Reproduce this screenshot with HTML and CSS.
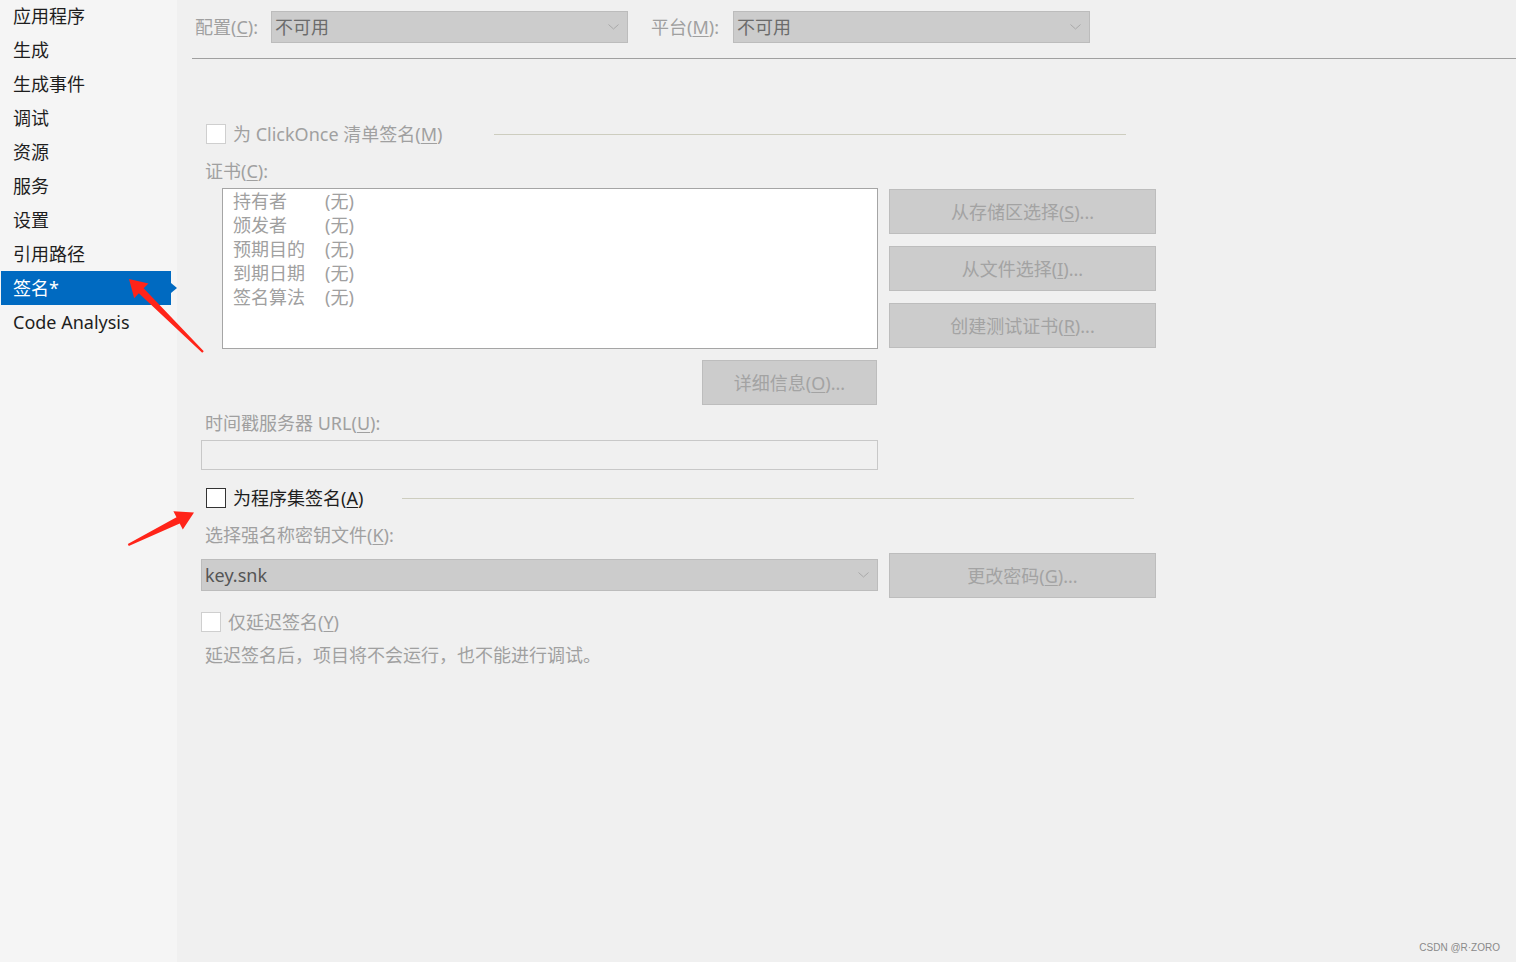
FILE: index.html
```html
<!DOCTYPE html>
<html lang="zh-CN">
<head>
<meta charset="utf-8">
<title>签名</title>
<link rel="stylesheet" href="styles.css">
</head>
<body>
<div class="app">
  <nav class="sidebar">
    <div class="nav-item">应用程序</div>
    <div class="nav-item">生成</div>
    <div class="nav-item">生成事件</div>
    <div class="nav-item">调试</div>
    <div class="nav-item">资源</div>
    <div class="nav-item">服务</div>
    <div class="nav-item">设置</div>
    <div class="nav-item">引用路径</div>
    <div class="nav-item active">签名*</div>
    <div class="nav-item">Code Analysis</div>
  </nav>
  <main class="main">
    <div class="topbar">
      <span class="lbl dis lbl-config">配置(<u>C</u>):</span>
      <div class="combo combo-top">
        <span class="combo-text">不可用</span>
        <svg class="chev" width="11" height="6" viewBox="0 0 11 6"><polyline points="0.5,0.5 5.5,5 10.5,0.5" fill="none" stroke="#a8a8a8" stroke-width="1"/></svg>
      </div>
      <span class="lbl dis lbl-platform">平台(<u>M</u>):</span>
      <div class="combo combo-top">
        <span class="combo-text">不可用</span>
        <svg class="chev" width="11" height="6" viewBox="0 0 11 6"><polyline points="0.5,0.5 5.5,5 10.5,0.5" fill="none" stroke="#a8a8a8" stroke-width="1"/></svg>
      </div>
    </div>

    <div class="content">
      <div class="check-row row-clickonce">
        <span class="cb cb-dis"></span>
        <span class="dis">为 ClickOnce 清单签名(<u>M</u>)</span>
        <span class="rule rule-clickonce"></span>
      </div>

      <div class="field-label dis lbl-cert">证书(<u>C</u>):</div>

      <div class="pair-grid cert-grid">
        <div class="cert-box">
          <div class="cert-row"><span class="cert-key">持有者</span><span>(无)</span></div>
          <div class="cert-row"><span class="cert-key">颁发者</span><span>(无)</span></div>
          <div class="cert-row"><span class="cert-key">预期目的</span><span>(无)</span></div>
          <div class="cert-row"><span class="cert-key">到期日期</span><span>(无)</span></div>
          <div class="cert-row"><span class="cert-key">签名算法</span><span>(无)</span></div>
        </div>
        <div class="btn-stack">
          <div class="btn">从存储区选择(<u>S</u>)...</div>
          <div class="btn">从文件选择(<u>I</u>)...</div>
          <div class="btn">创建测试证书(<u>R</u>)...</div>
        </div>
        <div class="btn btn-details">详细信息(<u>O</u>)...</div>
      </div>

      <div class="field-label dis lbl-url">时间戳服务器 URL(<u>U</u>):</div>
      <div class="textbox"></div>

      <div class="check-row row-assembly">
        <span class="cb cb-on"></span>
        <span class="strong">为程序集签名(<u>A</u>)</span>
        <span class="rule rule-assembly"></span>
      </div>

      <div class="field-label dis lbl-key">选择强名称密钥文件(<u>K</u>):</div>

      <div class="pair-grid key-grid">
        <div class="combo combo-key">
          <span class="combo-text key-text">key.snk</span>
          <svg class="chev" width="11" height="6" viewBox="0 0 11 6"><polyline points="0.5,0.5 5.5,5 10.5,0.5" fill="none" stroke="#a8a8a8" stroke-width="1"/></svg>
        </div>
        <div class="btn">更改密码(<u>G</u>)...</div>
      </div>

      <div class="check-row row-delay">
        <span class="cb cb-dis"></span>
        <span class="dis">仅延迟签名(<u>Y</u>)</span>
      </div>

      <div class="field-label dis lbl-note">延迟签名后，项目将不会运行，也不能进行调试。</div>
    </div>
  </main>
</div>

<svg class="arrows" width="1516" height="962" viewBox="0 0 1516 962">
  <polygon fill="#ff2419" points="129,279 148.5,283.5 143.6,288.3 203.8,351.2 202.2,352.8 138.8,293.3 134.2,298.2"/>
  <polygon fill="#ff2419" points="194,512.5 182.8,529.4 179.7,523.4 128.8,545.9 127.8,544.1 176.5,517.2 173.4,511.2"/>
</svg>

<div class="watermark">CSDN @R·ZORO</div>
</body>
</html>
```

FILE: styles.css
```css
* {
  box-sizing: border-box;
}

html, body {
  margin: 0;
  padding: 0;
}

body {
  width: 1516px;
  height: 962px;
  overflow: hidden;
  background: #f0f0f0;
  font-family: "Noto Sans", "Noto Sans CJK SC", sans-serif;
  font-size: 18px;
  line-height: 24px;
  color: #1e1e1e;
  position: relative;
}

u {
  text-decoration: underline;
  text-underline-offset: 2px;
  text-decoration-thickness: 1px;
}

.app {
  display: flex;
  height: 962px;
}

/* ---------- sidebar ---------- */
.sidebar {
  width: 177px;
  flex: 0 0 177px;
  background: #f5f5f5;
  padding-top: 0;
  margin-top: -1px;
}

.nav-item {
  height: 34px;
  line-height: 34px;
  padding-left: 13px;
  color: #1e1e1e;
  white-space: nowrap;
}

.nav-item.active {
  position: relative;
  margin-left: 1px;
  width: 170px;
  padding-left: 12px;
  background: #006ac1;
  color: #ffffff;
}

.nav-item.active::after {
  content: "";
  position: absolute;
  right: -6px;
  top: 12px;
  border-top: 5px solid transparent;
  border-bottom: 5px solid transparent;
  border-left: 6px solid #006ac1;
}

/* ---------- main ---------- */
.main {
  flex: 1;
  padding-left: 15px;
}

.dis {
  color: #a0a0a0;
}

.strong {
  color: #1e1e1e;
}

.topbar {
  display: flex;
  align-items: center;
  height: 59px;
  padding: 11px 0 15px 3px;
  border-bottom: 1px solid #a0a0a0;
}

.lbl {
  white-space: nowrap;
}

.lbl-config {
  width: 76px;
}

.lbl-platform {
  width: 82px;
  margin-left: 23px;
}

.combo {
  display: flex;
  align-items: center;
  justify-content: space-between;
  height: 32px;
  background: #cccccc;
  border: 1px solid #bcbcbc;
  padding: 0 8px 0 3px;
}

.combo-top {
  width: 357px;
}

.combo-text {
  color: #6b6b6b;
}

.key-text {
  color: #555555;
}

.chev {
  display: block;
}

/* ---------- content ---------- */
.content {
  padding-left: 9px;
}

.check-row {
  display: flex;
  align-items: center;
  height: 24px;
  white-space: nowrap;
}

.cb {
  display: block;
  width: 20px;
  height: 20px;
  flex: 0 0 20px;
  background: #ffffff;
  margin-right: 7px;
}

.cb-dis {
  border: 1px solid #cfcfcf;
}

.cb-on {
  border: 1px solid #333333;
}

.rule {
  display: block;
  height: 1px;
  background: #cdcdbf;
  flex: 1;
}

.row-clickonce {
  margin-top: 63px;
  margin-left: 5px;
  width: 920px;
}

.rule-clickonce {
  margin-left: 52px;
}

.field-label {
  padding-left: 4px;
  white-space: nowrap;
}

.lbl-cert {
  margin-top: 13px;
}

.pair-grid {
  display: grid;
  grid-template-columns: 677px 267px;
  column-gap: 11px;
}

.cert-grid {
  margin-top: 5px;
  row-gap: 11px;
}

.cert-box {
  margin-left: 21px;
  height: 161px;
  background: #ffffff;
  border: 1px solid #a5a5a5;
  padding: 0 0 0 10px;
  color: #a0a0a0;
}

.cert-row {
  display: flex;
  height: 24px;
}

.cert-key {
  width: 92px;
}

.btn-stack {
  display: flex;
  flex-direction: column;
  gap: 12px;
  margin-top: 1px;
}

.btn {
  height: 45px;
  background: #cccccc;
  border: 1px solid #bdbdbd;
  color: #a3a3a3;
  display: flex;
  align-items: center;
  justify-content: center;
  white-space: nowrap;
}

.btn-details {
  width: 175px;
  justify-self: end;
  margin-right: 1px;
}

.lbl-url {
  margin-top: 6px;
}

.textbox {
  margin-top: 5px;
  width: 677px;
  height: 30px;
  border: 1px solid #c8c8c8;
  background: #f0f0f0;
}

.row-assembly {
  margin-top: 16px;
  margin-left: 5px;
  width: 928px;
}

.rule-assembly {
  margin-left: 39px;
}

.lbl-key {
  margin-top: 13px;
}

.key-grid {
  margin-top: 6px;
}

.combo-key {
  margin-top: 6px;
  width: 677px;
}

.row-delay {
  margin-top: 12px;
}

.lbl-note {
  margin-top: 9px;
}

/* ---------- overlays ---------- */
.arrows {
  position: absolute;
  left: 0;
  top: 0;
  pointer-events: none;
}

.watermark {
  position: absolute;
  right: 16px;
  bottom: 7px;
  font-family: "Liberation Sans", "Noto Sans", sans-serif;
  font-size: 10px;
  line-height: 14px;
  color: #8a8a8a;
}
```
